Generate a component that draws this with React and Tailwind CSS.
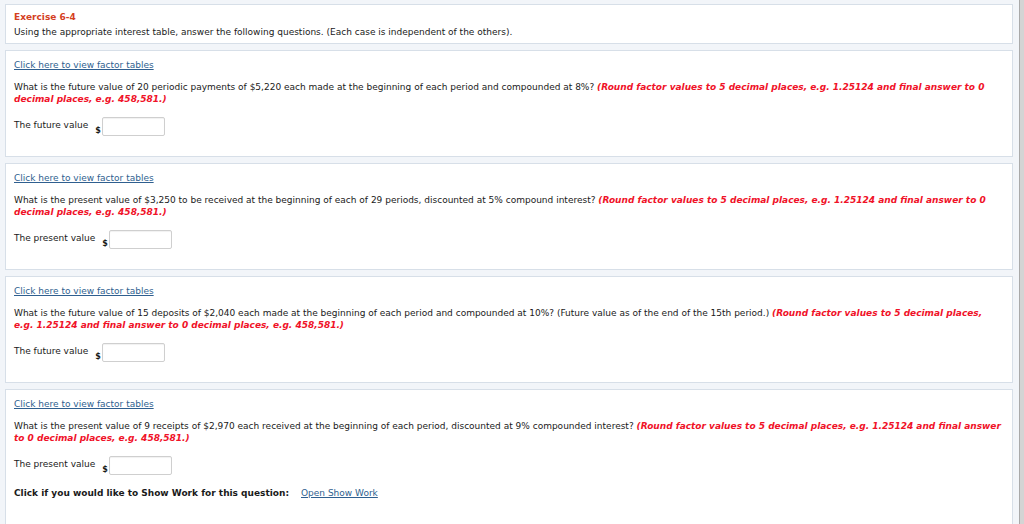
import React from "react";

const F = { fontFamily: '"DejaVu Sans", Verdana, sans-serif' };

function Link({ children }) {
  return (
    <a href="#" className="text-[#2f5f8f] underline underline-offset-[1px]">
      {children}
    </a>
  );
}

function Answer({ label }) {
  return (
    <div className="flex h-[19px] items-start">
      <span className="mt-[3px] mr-[7px] leading-[11px]">{label}</span>
      <span className="mt-[9px] font-bold leading-[10px] text-[8px]">$</span>
      <div className="ml-[1px] h-[19px] w-[63px] rounded-[2px] border border-[#cfcfcf] bg-white shadow-[inset_0_1px_1px_rgba(0,0,0,0.06)]" />
    </div>
  );
}

function Question({ line1, red1, line2, label, children }) {
  return (
    <div className="border border-[#d7dfe8] bg-white pl-[8px] pt-[9px] pb-[20px]">
      <div className="leading-[11px]">
        <Link>Click here to view factor tables</Link>
      </div>
      <div className="mt-[11px] leading-[11.5px] whitespace-nowrap">
        <div>
          {line1}{" "}
          <span className="font-bold italic text-[#f01228]">{red1}</span>
        </div>
        <div className="font-bold italic text-[#f01228]">{line2}</div>
      </div>
      <div className="mt-[12px]">
        <Answer label={label} />
      </div>
      {children}
    </div>
  );
}

export default function App() {
  return (
    <div
      className="flex h-[524px] w-[1024px] overflow-hidden bg-[#f2f5f9] text-[9px] text-[#1a1a1a]"
      style={F}
    >
      <div className="flex flex-1 flex-col gap-[6px] pl-[5px] pr-[6px] pt-[4px]">
        <div className="border border-[#d7dfe8] bg-white pl-[8px] pt-[5px] pb-[4px]">
          <div className="font-bold text-[#d4401f] leading-[15px]">Exercise 6-4</div>
          <div className="leading-[14px]">
            Using the appropriate interest table, answer the following questions. (Each case is independent of the others).
          </div>
        </div>

        <Question
          line1="What is the future value of 20 periodic payments of $5,220 each made at the beginning of each period and compounded at 8%?"
          red1="(Round factor values to 5 decimal places, e.g. 1.25124 and final answer to 0"
          line2="decimal places, e.g. 458,581.)"
          label="The future value"
        />

        <Question
          line1="What is the present value of $3,250 to be received at the beginning of each of 29 periods, discounted at 5% compound interest?"
          red1="(Round factor values to 5 decimal places, e.g. 1.25124 and final answer to 0"
          line2="decimal places, e.g. 458,581.)"
          label="The present value"
        />

        <Question
          line1="What is the future value of 15 deposits of $2,040 each made at the beginning of each period and compounded at 10%? (Future value as of the end of the 15th period.)"
          red1="(Round factor values to 5 decimal places,"
          line2="e.g. 1.25124 and final answer to 0 decimal places, e.g. 458,581.)"
          label="The future value"
        />

        <Question
          line1="What is the present value of 9 receipts of $2,970 each received at the beginning of each period, discounted at 9% compounded interest?"
          red1="(Round factor values to 5 decimal places, e.g. 1.25124 and final answer"
          line2="to 0 decimal places, e.g. 458,581.)"
          label="The present value"
        >
          <div className="mt-[13px] flex leading-[11px] pb-[40px]">
            <span className="font-bold">Click if you would like to Show Work for this question:</span>
            <span className="ml-[12px]">
              <Link>Open Show Work</Link>
            </span>
          </div>
        </Question>
      </div>
      <div className="w-[5px] shrink-0 border-l border-[#a9a9a9] bg-[#d4d4d4]" />
    </div>
  );
}
